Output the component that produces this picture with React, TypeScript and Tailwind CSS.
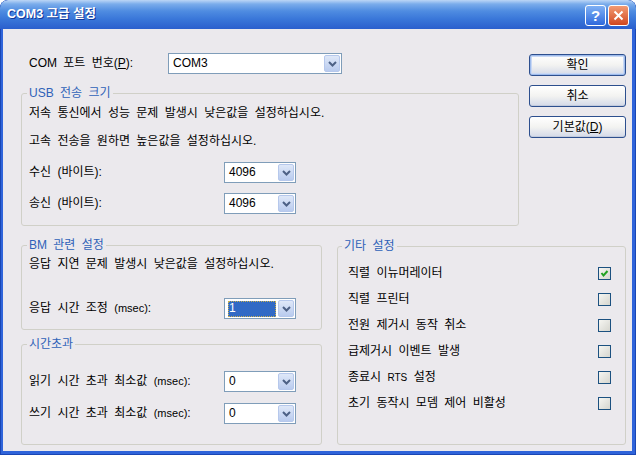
import type { ReactNode } from 'react';

// XP-style "COM3 고급 설정" dialog

function Arrow(): ReactNode {
  return (
    <span className="flex w-[16px] shrink-0 items-center justify-center rounded-[2px] border border-[#b6c8ec] bg-linear-to-b from-[#dfe8f8] to-[#b9cbee]">
      <svg width="9" height="6" viewBox="0 0 9 6">
        <path d="M1 1 L4.5 4.5 L8 1" fill="none" stroke="#4d6185" strokeWidth="2" />
      </svg>
    </span>
  );
}

function Combo({ value, width, focused }: { value: string; width: string; focused?: boolean }): ReactNode {
  return (
    <div className={`flex h-[21px] shrink-0 border border-[#7f9db9] bg-white p-px ${width}`}>
      <div className="flex min-w-0 flex-1 items-center pl-[2px] pr-[2px]">
        {focused ? (
          <span className="flex h-[16px] w-full items-center bg-[#316ac5] pl-px text-white outline-1 outline-dotted outline-[#c8b050] -outline-offset-1">
            {value}
          </span>
        ) : (
          <span className="pl-px">{value}</span>
        )}
      </div>
      <Arrow />
    </div>
  );
}

function Check({ checked }: { checked?: boolean }): ReactNode {
  return (
    <span className="flex h-[13px] w-[13px] shrink-0 items-center justify-center border border-[#1c5180] bg-linear-to-br from-[#f6f6f2] to-[#d6d6cf]">
      {checked && (
        <svg width="9" height="9" viewBox="0 0 9 9">
          <path d="M1.5 4 L3.5 6.5 L7.5 2" fill="none" stroke="#21a121" strokeWidth="2" />
        </svg>
      )}
    </span>
  );
}

function Btn({ children, primary }: { children: ReactNode; primary?: boolean }): ReactNode {
  return (
    <button
      className={`
        flex h-[22px] w-full items-center justify-center rounded-[3px]
        border border-[#2d4f8e] bg-linear-to-b from-white via-[#f3f3f1] to-[#d3d9e8]
        ${primary ? 'shadow-[inset_0_0_0_1px_#9fbcec,inset_0_0_0_2px_#c9d8f4]' : 'shadow-[inset_0_-1px_0_#c3cbdc]'}
      `}
    >
      {children}
    </button>
  );
}

function Group({
  title,
  className,
  legendClass = '-ml-[2px]',
  children,
}: {
  title: string;
  className: string;
  legendClass?: string;
  children: ReactNode;
}): ReactNode {
  return (
    <fieldset className={`rounded-[3px] border border-[#d0d0c8] ${className}`}>
      <legend className={`px-[2px] leading-[15px] text-[#2f62b8] ${legendClass}`}>{title}</legend>
      {children}
    </fieldset>
  );
}

function Row({ label, value, className, focused }: { label: ReactNode; value: string; className: string; focused?: boolean }): ReactNode {
  return (
    <div className={`flex h-[21px] items-center ${className}`}>
      <span className="w-[195px] shrink-0">{label}</span>
      <Combo value={value} width="w-[72px]" focused={focused} />
    </div>
  );
}

const msec = <span className="text-[11px]">(msec)</span>;

const options: { label: ReactNode; checked?: boolean }[] = [
  { label: '직렬 이뉴머레이터', checked: true },
  { label: '직렬 프린터' },
  { label: '전원 제거시 동작 취소' },
  { label: '급제거시 이벤트 발생' },
  { label: <>종료시 <span className="text-[10px]">RTS</span> 설정</> },
  { label: '초기 동작시 모뎀 제어 비활성' },
];

export default function App(): ReactNode {
  return (
    <div className="flex h-[455px] w-[636px] flex-col overflow-hidden rounded-t-[8px] bg-[#2f64da] font-['Liberation_Sans','Noto_Sans_CJK_KR',sans-serif] text-[12px] leading-[15px] text-black shadow-[inset_0_0_0_1px_#1a46b4] [word-spacing:3px]">
      {/* Title bar */}
      <div className="flex h-[29px] shrink-0 items-center rounded-t-[8px] bg-[linear-gradient(to_bottom,#bcd6f6_0%,#7aaceb_14%,#4f8ce1_38%,#3a77d9_65%,#2b5fcd_100%)] pl-[7px] pr-[7px] [word-spacing:0]">
        <span className="flex-1 text-[12.5px] font-bold text-white [text-shadow:1px_1px_0_#10379a]">COM3 고급 설정</span>
        <div className="flex gap-[2px] pt-px">
          <span className="flex h-[21px] w-[21px] items-center justify-center rounded-[3px] border border-white bg-linear-to-b from-[#7fb0f4] to-[#2f68dc] text-[15px] font-bold text-white">
            ?
          </span>
          <span className="flex h-[21px] w-[21px] items-center justify-center rounded-[3px] border border-white bg-linear-to-b from-[#f29a72] to-[#d0461c]">
            <svg width="11" height="11" viewBox="0 0 11 11">
              <path d="M1.5 1.5 L9.5 9.5 M9.5 1.5 L1.5 9.5" stroke="white" strokeWidth="2" />
            </svg>
          </span>
        </div>
      </div>

      {/* Body */}
      <div className="mb-[4px] ml-[3px] mr-[4px] flex flex-1 flex-col bg-[#ebe9ed] pb-[6px] pl-[18px] pr-[6px]">
        <div className="flex items-start gap-[10px]">
          <div className="w-[498px] pt-[24px]">
            <div className="flex h-[21px] items-center pl-[8px]">
              <span className="w-[139px] shrink-0">
                COM 포트 번호(<u>P</u>):
              </span>
              <Combo value="COM3" width="w-[174px]" />
            </div>
            <Group title="USB 전송 크기" className="mt-[12px] px-[7px] pb-[11px]">
              <p className="mt-[5px]">저속 통신에서 성능 문제 발생시 낮은값을 설정하십시오.</p>
              <p className="mt-[13px]">고속 전송을 원하면 높은값을 설정하십시오.</p>
              <Row className="mt-[13px]" label="수신 (바이트):" value="4096" />
              <Row className="mt-[10px]" label="송신 (바이트):" value="4096" />
            </Group>
          </div>
          <div className="flex w-[97px] flex-col gap-[9px] pt-[25px]">
            <Btn primary>확인</Btn>
            <Btn>취소</Btn>
            <Btn>
              기본값(<u>D</u>)
            </Btn>
          </div>
        </div>

        <div className="flex flex-1 gap-[15px]">
          <div className="flex w-[301px] flex-col">
            <Group title="BM 관련 설정" className="mt-[12px] px-[7px] pb-[10px]">
              <p className="mt-[4px]">응답 지연 문제 발생시 낮은값을 설정하십시오.</p>
              <Row className="mt-[26px]" label={<>응답 시간 조정 {msec}:</>} value="1" focused />
            </Group>
            <Group title="시간초과" className="mt-[7px] flex-1 px-[7px] pb-[19px]">
              <Row className="mt-[19px]" label={<>읽기 시간 초과 최소값 {msec}:</>} value="0" />
              <Row className="mt-[11px]" label={<>쓰기 시간 초과 최소값 {msec}:</>} value="0" />
            </Group>
          </div>
          <Group title="기타 설정" className="mt-[13px] flex-1 pl-[10px] pr-[14px]" legendClass="-ml-[6px]">
            <div className="mt-[6px] flex flex-col">
              {options.map((o, i) => (
                <div key={i} className="flex h-[26px] items-center justify-between">
                  <span>{o.label}</span>
                  <Check checked={o.checked} />
                </div>
              ))}
            </div>
          </Group>
        </div>
      </div>
    </div>
  );
}
